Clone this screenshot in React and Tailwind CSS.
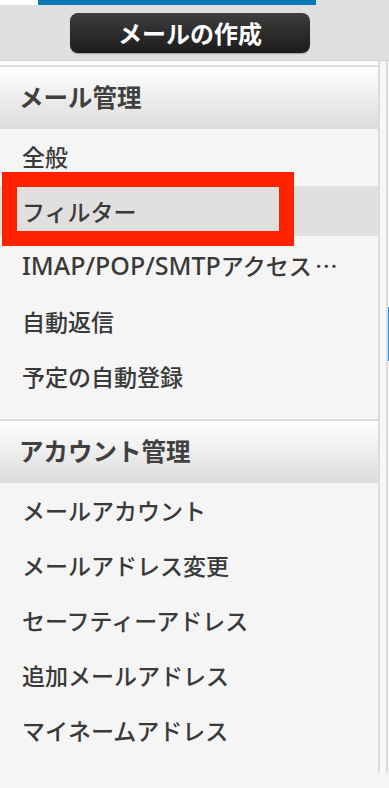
import React from 'react';

const mailItems = ['全般', 'フィルター', 'imap', '自動返信', '予定の自動登録'];
const accountItems = ['メールアカウント', 'メールアドレス変更', 'セーフティーアドレス', '追加メールアドレス', 'マイネームアドレス'];

function SectionHeader({ title }) {
  return (
    <div className="h-[64px] border-y-2 border-[#dcdcdc] bg-gradient-to-b from-[#ffffff] to-[#dddddd] flex items-center pl-[19px]">
      <span className="text-[24.5px] font-bold text-[#404040] leading-normal">{title}</span>
    </div>
  );
}

function ImapLabel() {
  return (
    <span className="whitespace-nowrap">
      <span className="text-[25px]" style={{ fontFamily: '"Noto Sans", sans-serif' }}>IMAP/POP/SMTP</span>
      アクセス
      <span className="ml-[3px] tracking-[4px]" style={{ fontFamily: '"Noto Sans CJK JP", sans-serif' }}>…</span>
    </span>
  );
}

function MenuItem({ label, active }) {
  return (
    <div className={`relative h-[50px] flex items-center pl-[22px] ${active ? 'bg-[#e0e0e0]' : ''}`}>
      <span className="text-[23px] font-medium text-[#3a3a3a] leading-normal whitespace-nowrap">
        {label === 'imap' ? <ImapLabel /> : label}
      </span>
      {active && (
        <div className="absolute left-[2px] top-[-14px] w-[292px] h-[74px] border-[15px] border-[#ff2200]" />
      )}
    </div>
  );
}

function Section({ title, items, activeIndex }) {
  return (
    <div>
      <SectionHeader title={title} />
      <div className="flex flex-col gap-[5px] pt-[2px] pb-[18px]">
        {items.map((item, i) => (
          <MenuItem key={item} label={item} active={i === activeIndex} />
        ))}
      </div>
    </div>
  );
}

export default function App() {
  return (
    <div
      className="w-[389px] h-[788px] overflow-hidden bg-[#f5f5f5]"
      style={{ fontFamily: '"Noto Sans CJK JP", "Noto Sans", sans-serif' }}
    >
      <div className="relative h-[61px] bg-[#e0e0e0] border-b border-[#d2d2d2]">
        <div className="absolute top-0 left-0 flex h-[5px]">
          <div className="w-[38px] bg-white" />
          <div className="w-[278px] bg-[#0b79b5]" />
        </div>
        <div className="flex h-full items-start pt-[13px] pl-[70px]">
          <button className="w-[240px] h-[40px] rounded-[8px] bg-gradient-to-b from-[#3e3e3e] to-[#1c1c1c] shadow-[0_1px_1px_rgba(0,0,0,0.3)] flex items-center justify-center">
            <span className="text-[24px] font-bold text-white leading-normal">メールの作成</span>
          </button>
        </div>
      </div>
      <div className="flex">
        <div className="w-[380px] border-r-2 border-[#dcdcdc] bg-[#f5f5f5]">
          <div className="h-[4px] bg-white" />
          <Section title="メール管理" items={mailItems} activeIndex={1} />
          <Section title="アカウント管理" items={accountItems} activeIndex={-1} />
        </div>
        <div className="w-[6px] bg-[#f7f7f7]" />
        <div className="w-[2px] bg-[#dcdcdc]" />
        <div className="w-[1px] flex flex-col">
          <div className="h-[246px] bg-[#f5f5f5]" />
          <div className="h-[54px] bg-[#1e9be0]" />
        </div>
      </div>
    </div>
  );
}
